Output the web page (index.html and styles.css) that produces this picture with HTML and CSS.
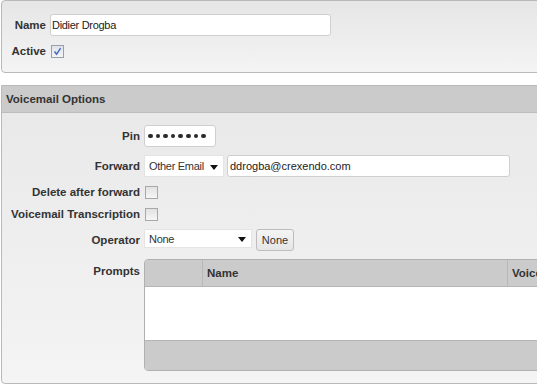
FILE: index.html
```html
<!DOCTYPE html>
<html>
<head>
<meta charset="utf-8">
<link rel="stylesheet" href="styles.css">
</head>
<body>
<div class="page">
  <div class="panel top-panel">
    <div class="row row-22">
      <label class="lbl lbl-top">Name</label>
      <div class="field name-field">Didier Drogba</div>
    </div>
    <div class="row row-14">
      <label class="lbl lbl-top">Active</label>
      <span class="check checked"><svg width="11" height="11" viewBox="0 0 11 11"><path d="M2.5 5.5 L4.6 8.2 L8.6 2.2" fill="none" stroke="#4a6bc0" stroke-width="1.5"/></svg></span>
    </div>
  </div>

  <div class="panel vm-panel">
    <div class="vm-header">Voicemail Options</div>
    <div class="vm-body">
      <div class="row row-22">
        <label class="lbl">Pin</label>
        <div class="field pin-field" aria-label="password"><span class="dot"></span><span class="dot"></span><span class="dot"></span><span class="dot"></span><span class="dot"></span><span class="dot"></span><span class="dot"></span><span class="dot"></span></div>
      </div>
      <div class="row row-22">
        <label class="lbl">Forward</label>
        <div class="select fwd-select"><span>Other Email</span><span class="arrow"></span></div>
        <div class="field email-field">ddrogba@crexendo.com</div>
      </div>
      <div class="row row-14">
        <label class="lbl">Delete after forward</label>
        <span class="check"></span>
      </div>
      <div class="row row-14">
        <label class="lbl">Voicemail Transcription</label>
        <span class="check"></span>
      </div>
      <div class="row row-22">
        <label class="lbl">Operator</label>
        <div class="select op-select"><span>None</span><span class="arrow"></span></div>
        <button class="btn">None</button>
      </div>
      <div class="row prompts-row">
        <label class="lbl prompts-lbl">Prompts</label>
        <div class="grid">
          <div class="grid-head">
            <div class="gcol gcol-1"></div>
            <div class="gcol gcol-2">Name</div>
            <div class="gcol gcol-3">Voice</div>
          </div>
          <div class="grid-body"></div>
          <div class="grid-foot"></div>
        </div>
      </div>
    </div>
  </div>
</div>
</body>
</html>
```

FILE: styles.css
```css
html, body {
  margin: 0;
  padding: 0;
  background: #ffffff;
  overflow: hidden;
}
body {
  width: 537px;
  height: 386px;
  font-family: "Liberation Sans", Arial, sans-serif;
  font-size: 12px;
  color: #333;
}
.page {
  padding-left: 1px;
  width: 580px;
}
.panel {
  border: 1px solid #b9b9b9;
  border-radius: 4px;
  box-sizing: border-box;
}
.top-panel {
  height: 73px;
  padding: 13px 0 0 0;
  background: linear-gradient(#e6e6e6, #f4f4f4);
  display: flex;
  flex-direction: column;
  gap: 8px;
}
.row {
  display: flex;
  align-items: center;
  gap: 4px;
}
.row-22 { height: 22px; }
.row-14 { height: 14px; }
.lbl {
  font-weight: bold;
  font-size: 11.5px;
  color: #333;
  text-align: right;
  flex: none;
  white-space: nowrap;
}
.lbl-top { width: 44px; }
.field {
  box-sizing: border-box;
  height: 22px;
  background: #fff;
  border: 1px solid #cfcfcf;
  border-radius: 3px;
  padding: 0 1px;
  display: flex;
  align-items: center;
  font-size: 11px;
  color: #222;
  white-space: nowrap;
}
.name-field { width: 281px; letter-spacing: -0.3px; }
.check {
  box-sizing: border-box;
  width: 13px;
  height: 13px;
  border: 1px solid #a8a8a8;
  background: linear-gradient(#e2e2e2, #f6f6f6);
  display: flex;
  align-items: center;
  justify-content: center;
  margin-left: 1px;
}
.check.checked {
  background: linear-gradient(#dfe3ea, #f3f4f7);
  border-color: #9aa0aa;
}
.vm-panel {
  margin-top: 12px;
  height: 299px;
  background: linear-gradient(#e8e8e8, #f4f4f4);
  border-top-left-radius: 0;
  border-top-right-radius: 0;
}
.vm-header {
  height: 26px;
  background: #cbcbcb;
  border-bottom: 1px solid #bdbdbd;
  font-weight: bold;
  font-size: 11.5px;
  color: #333;
  padding-left: 4px;
  display: flex;
  align-items: center;
}
.vm-body {
  padding-top: 12px;
  display: flex;
  flex-direction: column;
  gap: 8px;
}
.vm-body .lbl { width: 138px; }
.pin-field {
  width: 72px;
  gap: 3px;
  padding-left: 3px;
}
.dot {
  width: 4.6px;
  height: 4.6px;
  border-radius: 50%;
  background: #2a2a2a;
  flex: none;
}
.select {
  box-sizing: border-box;
  height: 22px;
  background: #fff;
  border: 1px solid #e4e4e4;
  display: flex;
  align-items: center;
  justify-content: space-between;
  padding: 0 5px 0 4px;
  font-size: 11px;
  letter-spacing: -0.3px;
  color: #333;
  white-space: nowrap;
}
.arrow {
  width: 0;
  height: 0;
  border-left: 4px solid transparent;
  border-right: 4px solid transparent;
  border-top: 5px solid #111;
  margin-top: 2px;
}
.fwd-select { width: 80px; }
.email-field { width: 283px; margin-left: -1px; padding-left: 2px; }
.op-select { width: 108px; height: 19px; margin-top: -3px; }
.btn {
  box-sizing: border-box;
  height: 22px;
  width: 38px;
  padding: 0;
  font-family: "Liberation Sans", Arial, sans-serif;
  font-size: 11px;
  color: #333;
  border: 1px solid #bdbdbd;
  border-radius: 3px;
  background: linear-gradient(#f4f4f4, #e6e6e6);
}
.prompts-row {
  align-items: flex-start;
  height: 112px;
}
.prompts-lbl { padding-top: 6px; }
.grid {
  box-sizing: border-box;
  width: 420px;
  height: 112px;
  border: 1px solid #b0b0b0;
  border-radius: 4px;
  overflow: hidden;
  display: flex;
  flex-direction: column;
}
.grid-head {
  height: 26px;
  background: #cbcbcb;
  border-bottom: 1px solid #b5b5b5;
  display: flex;
  flex: none;
}
.gcol {
  box-sizing: border-box;
  height: 100%;
  display: flex;
  align-items: center;
  font-weight: bold;
  font-size: 11.5px;
  color: #333;
  padding-left: 4px;
  white-space: nowrap;
}
.gcol-1 { width: 58px; border-right: 1px solid #b8b8b8; }
.gcol-2 { width: 305px; border-right: 1px solid #b8b8b8; }
.gcol-3 { flex: 1; }
.grid-body {
  height: 53px;
  background: #fff;
  border-bottom: 1px solid #b5b5b5;
  flex: none;
}
.grid-foot {
  flex: 1;
  background: #cbcbcb;
}
```
